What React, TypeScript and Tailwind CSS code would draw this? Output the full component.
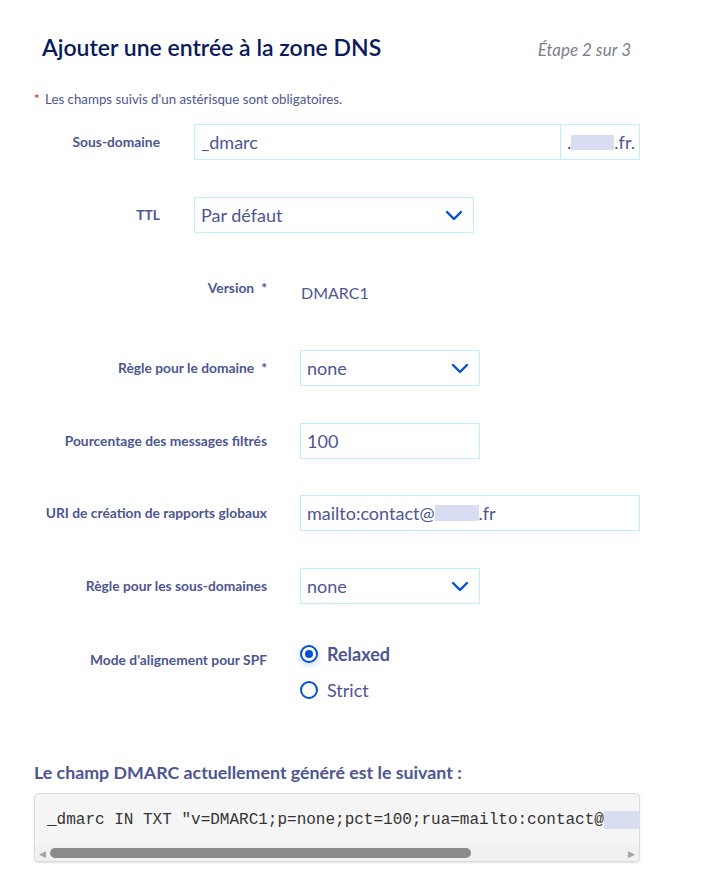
import React from "react";

const ui = { fontFamily: '"Source Sans Pro", Lato, "Noto Sans", sans-serif' };
const mono = { fontFamily: '"Liberation Mono", "DejaVu Sans Mono", monospace' };

function Chevron() {
  return (
    <svg width="18" height="11" viewBox="0 0 18 11" fill="none">
      <path d="M2 2l7 7 7-7" stroke="#0050d7" strokeWidth="2.4" strokeLinecap="round" strokeLinejoin="round" />
    </svg>
  );
}

function Blur({ className }: { className: string }) {
  return <span className={`inline-block bg-[#d9ddf1] ${className}`} />;
}

function Select({ value, width }: { value: string; width: string }) {
  return (
    <div className={`${width} h-[36px] border border-[#bdf0ff] flex items-center justify-between pl-[6px] pr-[10px] text-[18px] text-[#4d5693]`}>
      <span>{value}</span>
      <Chevron />
    </div>
  );
}

function Label({ children, req, width }: { children: React.ReactNode; req?: boolean; width: string }) {
  return (
    <div className={`${width} shrink-0 text-right text-[13.8px] font-bold text-[#4d5693]`}>
      {children}
      {req && <span className="ml-[7px]">*</span>}
    </div>
  );
}

function Radio({ checked, label }: { checked?: boolean; label: string }) {
  return (
    <div className="flex items-center gap-[9px] h-[18px]">
      <span className={`w-[18px] h-[18px] rounded-full border-2 border-[#0050d7] flex items-center justify-center ${checked ? "shadow-[0_2px_6px_rgba(0,80,215,0.25)]" : ""}`}>
        {checked && <span className="w-[8px] h-[8px] rounded-full bg-[#0050d7]" />}
      </span>
      <span className={`text-[18px] text-[#4d5693] ${checked ? "font-bold" : ""}`}>{label}</span>
    </div>
  );
}

export default function App() {
  return (
    <div className="w-[726px] h-[883px] bg-white px-[34px] overflow-hidden" style={ui}>
      {/* Header */}
      <div className="flex items-baseline justify-between pl-[8px] pr-[61px] pt-[30px]">
        <h1 className="text-[23px] font-semibold text-[#0b1a5c]">Ajouter une entrée à la zone DNS</h1>
        <span className="text-[17px] italic text-[#7b7f8c]">Étape 2 sur 3</span>
      </div>

      <p className="mt-[25px] text-[13.3px] text-[#4d5693]">
        <span className="text-[#e4002b] mr-[2px]">*</span> Les champs suivis d'un astérisque sont obligatoires.
      </p>

      {/* Sous-domaine + TTL */}
      <div className="mt-[15px] flex flex-col gap-[37px]">
        <div className="flex items-center gap-[34px]">
          <Label width="w-[126px]">Sous-domaine</Label>
          <div className="flex h-[36px]">
            <div className="w-[367px] border border-[#bdf0ff] flex items-center pl-[6px] text-[18px] text-[#4d5693]">_dmarc</div>
            <div className="w-[79px] border border-l-0 border-[#bdf0ff] flex items-center justify-end pr-[4px] text-[18px] text-[#4d5693]">
              .<Blur className="w-[43px] h-[15px]" />.fr.
            </div>
          </div>
        </div>
        <div className="flex items-center gap-[34px]">
          <Label width="w-[126px]">TTL</Label>
          <Select value="Par défaut" width="w-[280px]" />
        </div>
      </div>

      {/* DMARC fields */}
      <div className="mt-[45px] flex flex-col">
        <div className="flex items-start gap-[33px] h-[36px]">
          <Label width="w-[233px]" req>Version</Label>
          <span className="pt-[3px] pl-[1px] text-[16px] text-[#4d5693]">DMARC1</span>
        </div>

        <div className="mt-[36px] flex items-center gap-[33px]">
          <Label width="w-[233px]" req>Règle pour le domaine</Label>
          <Select value="none" width="w-[180px]" />
        </div>

        <div className="mt-[37px] flex items-center gap-[33px]">
          <Label width="w-[233px]">Pourcentage des messages filtrés</Label>
          <div className="w-[180px] h-[36px] border border-[#bdf0ff] flex items-center pl-[6px] text-[18px] text-[#4d5693]">100</div>
        </div>

        <div className="mt-[36px] flex items-center gap-[33px]">
          <Label width="w-[233px]">URI de création de rapports globaux</Label>
          <div className="w-[340px] h-[36px] border border-[#bdf0ff] flex items-center pl-[6px] text-[18px] text-[#4d5693]">
            mailto:contact@<Blur className="w-[44px] h-[16px]" />.fr
          </div>
        </div>

        <div className="mt-[37px] flex items-center gap-[33px]">
          <Label width="w-[233px]">Règle pour les sous-domaines</Label>
          <Select value="none" width="w-[180px]" />
        </div>

        <div className="mt-[41px] flex items-start gap-[33px]">
          <Label width="w-[233px]"><span className="relative top-[5px]">Mode d'alignement pour SPF</span></Label>
          <div className="flex flex-col gap-[18px]">
            <Radio checked label="Relaxed" />
            <Radio label="Strict" />
          </div>
        </div>
      </div>

      {/* Generated record */}
      <h2 className="mt-[60px] text-[17.8px] font-bold text-[#4d5693]">Le champ DMARC actuellement généré est le suivant :</h2>
      <div className="mt-[7px] w-[606px] border border-[#dcdcdc] rounded-[4px] bg-[#f5f5f5] shadow-[0_1px_2px_rgba(0,0,0,0.12)] overflow-hidden">
        <div className="h-[51px] flex items-center pl-[12px] whitespace-nowrap overflow-hidden text-[16px] text-[#333]" style={mono}>
          _dmarc IN TXT "v=DMARC1;p=none;pct=100;rua=mailto:contact@
          <Blur className="w-[44px] h-[18px]" />
        </div>
        <div className="h-[16px] bg-[#f1f1f1] flex items-center px-[4px] gap-[4px]">
          <span className="text-[9px] text-[#a3a3a3] leading-none">◀</span>
          <div className="flex-1 h-[16px] flex items-center">
            <div className="w-[421px] h-[10px] rounded-full bg-[#8a8a8a]" />
          </div>
          <span className="text-[9px] text-[#a3a3a3] leading-none">▶</span>
        </div>
      </div>
    </div>
  );
}
